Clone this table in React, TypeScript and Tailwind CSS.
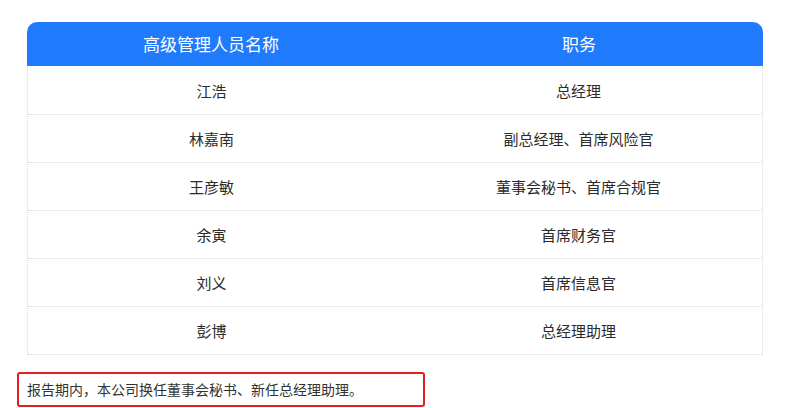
const rows: [string, string][] = [
  ["江浩", "总经理"],
  ["林嘉南", "副总经理、首席风险官"],
  ["王彦敏", "董事会秘书、首席合规官"],
  ["余寅", "首席财务官"],
  ["刘义", "首席信息官"],
  ["彭博", "总经理助理"],
];

const font = {
  fontFamily: '"Noto Sans CJK SC", "Noto Sans", sans-serif',
};

export default function App() {
  return (
    <div className="w-[797px] h-[408px] bg-white overflow-hidden" style={font}>
      <div className="pt-[22px] pl-[27px] w-[763px]">
        <div className="flex h-[44px] items-center rounded-t-[10px] bg-[#1f7bfc] text-[17px] text-white">
          <div className="flex-1 text-center">高级管理人员名称</div>
          <div className="flex-1 text-center">职务</div>
        </div>
        <div className="mt-px border-x border-dotted border-[#d9d9d9]">
          {rows.map(([name, title]) => (
            <div
              key={name}
              className="flex h-[48px] items-center border-b border-dotted border-[#d9d9d9] pt-[2px] text-[15px] text-[#2b2b2b]"
            >
              <div className="flex-1 text-center">{name}</div>
              <div className="flex-1 text-center">{title}</div>
            </div>
          ))}
        </div>
      </div>
      <div className="ml-[17px] mt-[17px] flex h-[35px] w-[408px] items-center rounded-[3px] border-2 border-[#e3201b] pl-[8px] text-[14px] text-[#333]">
        报告期内，本公司换任董事会秘书、新任总经理助理。
      </div>
    </div>
  );
}
